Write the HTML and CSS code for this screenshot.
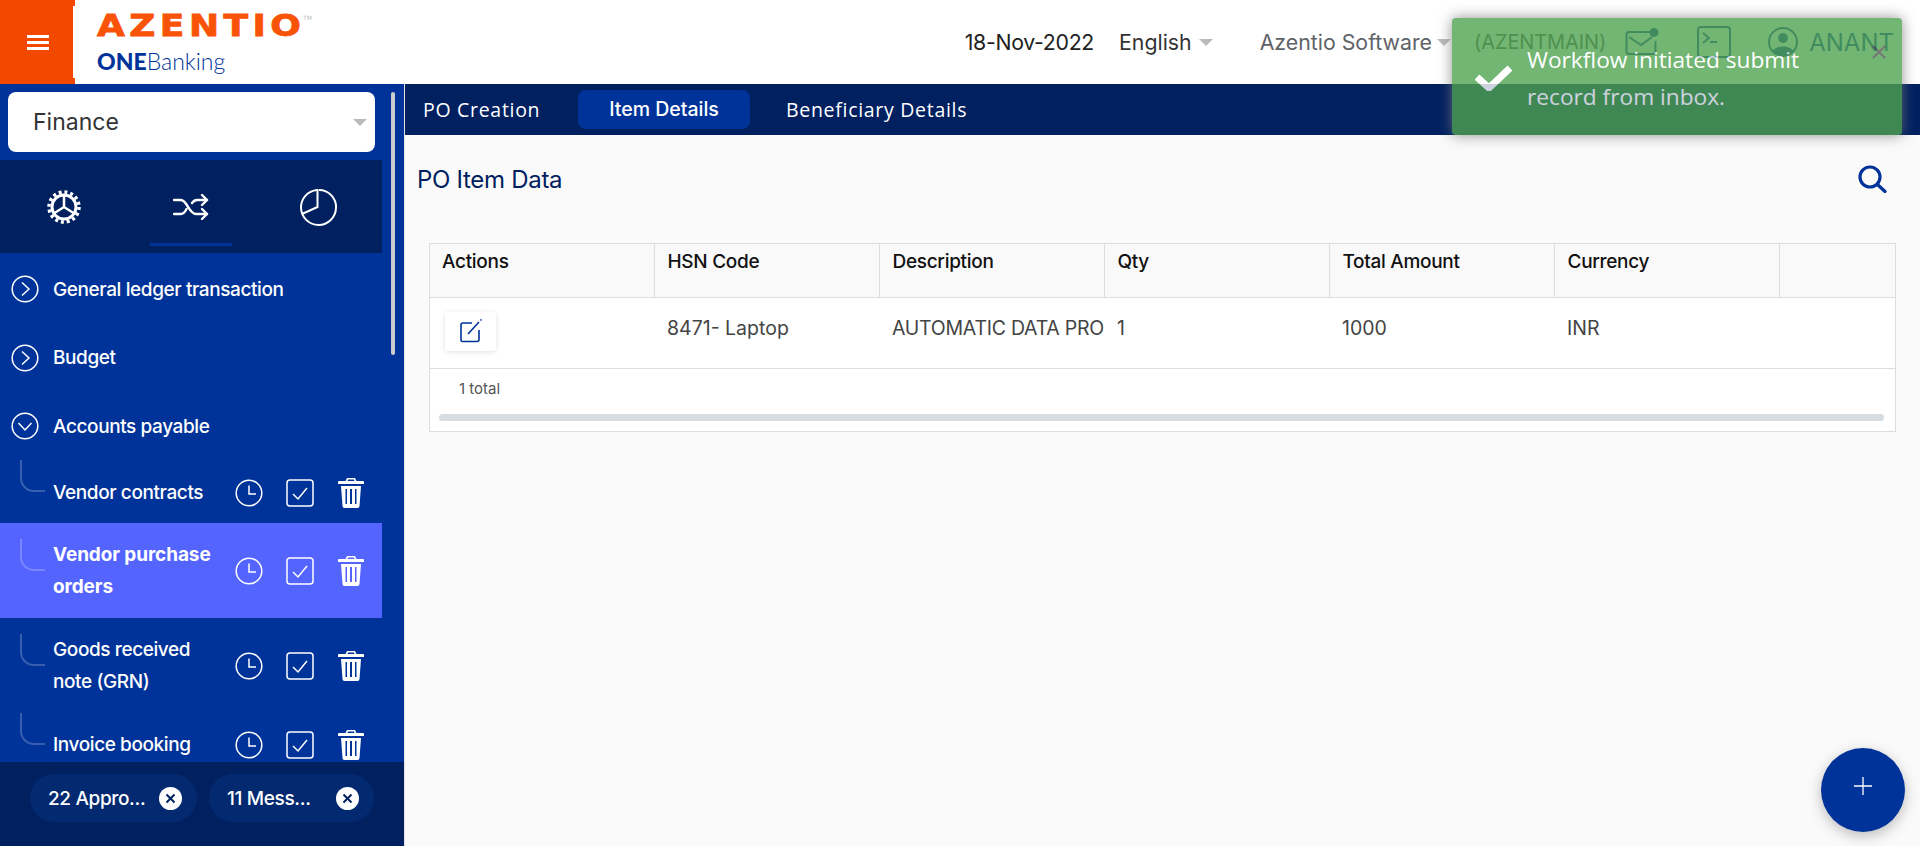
FILE: index.html
```html
<!DOCTYPE html>
<html lang="en">
<head>
  <meta charset="UTF-8">
  <meta name="viewport" content="width=device-width, initial-scale=1.0">
  <title>PO Item Data</title>
  <link rel="stylesheet" href="styles.css">
</head>
<body>
  <header class="topbar">
    <button class="burger" aria-label="Menu">
      <span></span><span></span><span></span>
    </button>
    <div class="burger-notch"></div>
    <div class="logo">
      <div class="logo-main"><span class="logo-word">AZENTIO</span><span class="logo-tm">TM</span></div>
      <div class="logo-sub"><b>ONE</b>Banking</div>
    </div>
    <div class="topbar-right">
      <span class="date">18-Nov-2022</span>
      <span class="lang">English</span><i class="caret"></i>
      <span class="company">Azentio Software</span><i class="caret"></i>
      <span class="branch">(AZENTMAIN)</span>
      <svg class="top-icon mail" width="34" height="28" viewBox="0 0 34 28" fill="none" stroke="#003399" stroke-width="2">
        <path d="M26 4H4a2.500 2.500 0 0 0-2.500 2.500v17A2.500 2.500 0 0 0 4 26h24a2.500 2.500 0 0 0 2.500-2.500V13"/>
        <path d="M4 9l12 8 11-8"/>
        <circle cx="29" cy="4.500" r="4.500" fill="#003399" stroke="none"/>
      </svg>
      <svg class="top-icon term" width="34" height="32" viewBox="0 0 34 32" fill="none" stroke="#003399" stroke-width="2">
        <rect x="1" y="1" width="32" height="30" rx="3"/>
        <path d="M6 7l6 5-6 5M13 16h7"/>
      </svg>
      <svg class="top-icon user" width="30" height="30" viewBox="0 0 30 30" fill="none" stroke="#003399" stroke-width="2">
        <circle cx="15" cy="15" r="14"/>
        <circle cx="15" cy="11" r="5" fill="#003399" stroke="none"/>
        <path d="M5 24c2-6 18-6 20 0a14 14 0 0 1-20 0z" fill="#003399" stroke="none"/>
      </svg>
      <span class="username">ANANT</span>
    </div>
  </header>

  <div class="layout">
    <aside class="sidebar">
      <div class="module-select">
        <span>Finance</span><i class="caret"></i>
      </div>
      <div class="side-tabs">
        <div class="side-tab">
          <svg width="34" height="34" viewBox="0 0 34 34" fill="none" stroke="#fff">
            <circle cx="17" cy="17" r="12" stroke-width="3"/>
            <circle cx="17" cy="17" r="15" stroke-width="3.500" stroke-dasharray="3 2.890"/>
            <path d="M17 17V6M17 17l-9.500 6M17 17l9.500 6" stroke-width="2.500"/>
          </svg>
        </div>
        <div class="side-tab active">
          <svg width="36" height="26" viewBox="0 0 36 26" fill="none" stroke="#fff" stroke-width="2.400" stroke-linecap="round" stroke-linejoin="round">
            <path d="M1 6h7c6 0 8 14 15 14h11M1 20h7c2.500 0 4-2 5.500-5M19 9c1.500-2 2.500-3 5-3h10"/>
            <path d="M29 1l5 5-5 5M29 15l5 5-5 5"/>
          </svg>
        </div>
        <div class="side-tab">
          <svg width="38" height="38" viewBox="0 0 38 38" fill="none" stroke="#fff" stroke-width="2">
            <path d="M18 2a17.500 17.500 0 1 0 19 18"/>
            <path d="M20 2a17 17 0 0 1 17 18"/>
            <path d="M18.500 1v18L3 26"/>
          </svg>
        </div>
      </div>

      <div class="menu">
        <div class="menu-row">
          <svg class="toggle" width="28" height="28" viewBox="0 0 28 28" fill="none" stroke="#fff" stroke-width="1.500">
            <circle cx="14" cy="14" r="12.800"/><path d="M11 7.500l7 6.500-7 6.500"/>
          </svg>
          General ledger transaction
        </div>
        <div class="menu-row">
          <svg class="toggle" width="28" height="28" viewBox="0 0 28 28" fill="none" stroke="#fff" stroke-width="1.500">
            <circle cx="14" cy="14" r="12.800"/><path d="M11 7.500l7 6.500-7 6.500"/>
          </svg>
          Budget
        </div>
        <div class="menu-row open">
          <svg class="toggle" width="28" height="28" viewBox="0 0 28 28" fill="none" stroke="#fff" stroke-width="1.500">
            <circle cx="14" cy="14" r="12.800"/><path d="M7.500 11l6.500 7 6.500-7"/>
          </svg>
          Accounts payable
        </div>

        <div class="sub-list">
          <div class="sub-item">
            <div class="tree-line"></div>
            <div class="sub-name">Vendor contracts</div>
            <svg class="row-icon" width="28" height="28" viewBox="0 0 28 28" fill="none" stroke="#fff" stroke-width="1.500">
              <circle cx="14" cy="14" r="12.800"/><path d="M14 6.500V15h7"/>
            </svg>
            <svg class="row-icon" width="28" height="28" viewBox="0 0 28 28" fill="none" stroke="#fff" stroke-width="1.500">
              <rect x="1" y="1" width="26" height="26" rx="3"/><path d="M7 15l5 5 9-11"/>
            </svg>
            <svg class="row-icon trash" width="26" height="30" viewBox="0 0 26 30" fill="#fff">
              <path d="M9 0h8l1.500 3H25a1 1 0 0 1 1 1v2H0V4a1 1 0 0 1 1-1h6.500zM10 1.500L9.500 3h7L16 1.500z"/>
              <path fill-rule="evenodd" d="M3 8h20l-1.500 20a2 2 0 0 1-2 2h-13a2 2 0 0 1-2-2zM7.500 11v15H9V11zM12 11v15h2V11zM17 11v15h1.500V11z"/>
            </svg>
          </div>
          <div class="sub-item active">
            <div class="tree-line"></div>
            <div class="sub-name">Vendor purchase orders</div>
            <svg class="row-icon" width="28" height="28" viewBox="0 0 28 28" fill="none" stroke="#fff" stroke-width="1.500">
              <circle cx="14" cy="14" r="12.800"/><path d="M14 6.500V15h7"/>
            </svg>
            <svg class="row-icon" width="28" height="28" viewBox="0 0 28 28" fill="none" stroke="#fff" stroke-width="1.500">
              <rect x="1" y="1" width="26" height="26" rx="3"/><path d="M7 15l5 5 9-11"/>
            </svg>
            <svg class="row-icon trash" width="26" height="30" viewBox="0 0 26 30" fill="#fff">
              <path d="M9 0h8l1.500 3H25a1 1 0 0 1 1 1v2H0V4a1 1 0 0 1 1-1h6.500zM10 1.500L9.500 3h7L16 1.500z"/>
              <path fill-rule="evenodd" d="M3 8h20l-1.500 20a2 2 0 0 1-2 2h-13a2 2 0 0 1-2-2zM7.500 11v15H9V11zM12 11v15h2V11zM17 11v15h1.500V11z"/>
            </svg>
          </div>
          <div class="sub-item">
            <div class="tree-line"></div>
            <div class="sub-name">Goods received note (GRN)</div>
            <svg class="row-icon" width="28" height="28" viewBox="0 0 28 28" fill="none" stroke="#fff" stroke-width="1.500">
              <circle cx="14" cy="14" r="12.800"/><path d="M14 6.500V15h7"/>
            </svg>
            <svg class="row-icon" width="28" height="28" viewBox="0 0 28 28" fill="none" stroke="#fff" stroke-width="1.500">
              <rect x="1" y="1" width="26" height="26" rx="3"/><path d="M7 15l5 5 9-11"/>
            </svg>
            <svg class="row-icon trash" width="26" height="30" viewBox="0 0 26 30" fill="#fff">
              <path d="M9 0h8l1.500 3H25a1 1 0 0 1 1 1v2H0V4a1 1 0 0 1 1-1h6.500zM10 1.500L9.500 3h7L16 1.500z"/>
              <path fill-rule="evenodd" d="M3 8h20l-1.500 20a2 2 0 0 1-2 2h-13a2 2 0 0 1-2-2zM7.500 11v15H9V11zM12 11v15h2V11zM17 11v15h1.500V11z"/>
            </svg>
          </div>
          <div class="sub-item">
            <div class="tree-line"></div>
            <div class="sub-name">Invoice booking</div>
            <svg class="row-icon" width="28" height="28" viewBox="0 0 28 28" fill="none" stroke="#fff" stroke-width="1.500">
              <circle cx="14" cy="14" r="12.800"/><path d="M14 6.500V15h7"/>
            </svg>
            <svg class="row-icon" width="28" height="28" viewBox="0 0 28 28" fill="none" stroke="#fff" stroke-width="1.500">
              <rect x="1" y="1" width="26" height="26" rx="3"/><path d="M7 15l5 5 9-11"/>
            </svg>
            <svg class="row-icon trash" width="26" height="30" viewBox="0 0 26 30" fill="#fff">
              <path d="M9 0h8l1.500 3H25a1 1 0 0 1 1 1v2H0V4a1 1 0 0 1 1-1h6.500zM10 1.500L9.500 3h7L16 1.500z"/>
              <path fill-rule="evenodd" d="M3 8h20l-1.500 20a2 2 0 0 1-2 2h-13a2 2 0 0 1-2-2zM7.500 11v15H9V11zM12 11v15h2V11zM17 11v15h1.500V11z"/>
            </svg>
          </div>
        </div>
      </div>

      <div class="side-footer">
        <div class="chip chip-approvals">
          <span>22 Appro...</span>
          <svg width="23" height="23" viewBox="0 0 23 23"><circle cx="11.500" cy="11.500" r="11.500" fill="#fff"/><path d="M7.500 7.500l8 8M15.500 7.500l-8 8" stroke="#002060" stroke-width="2"/></svg>
        </div>
        <div class="chip chip-messages">
          <span>11 Mess...</span>
          <svg width="23" height="23" viewBox="0 0 23 23"><circle cx="11.500" cy="11.500" r="11.500" fill="#fff"/><path d="M7.500 7.500l8 8M15.500 7.500l-8 8" stroke="#002060" stroke-width="2"/></svg>
        </div>
      </div>
      <div class="side-scroll"></div>
    </aside>

    <main class="content">
      <nav class="tabs">
        <a class="tab first">PO Creation</a>
        <a class="tab current">Item Details</a>
        <a class="tab last">Beneficiary Details</a>
      </nav>

      <div class="panel-head">
        <h2>PO Item Data</h2>
        <svg width="30" height="28" viewBox="0 0 30 28" fill="none" stroke="#003399" stroke-width="3.200" stroke-linecap="round">
          <circle cx="12" cy="12" r="10"/><path d="M20 20l7 6.500"/>
        </svg>
      </div>

      <div class="grid-wrap">
        <table class="grid">
          <thead>
            <tr>
              <th>Actions</th><th>HSN Code</th><th>Description</th><th>Qty</th><th>Total Amount</th><th>Currency</th><th class="spare"></th>
            </tr>
          </thead>
          <tbody>
            <tr>
              <td class="action-cell">
                <button class="edit-btn" aria-label="Edit">
                  <svg width="24" height="24" viewBox="0 0 24 24" fill="none" stroke="#003399" stroke-width="1.600">
                    <path d="M13 4H4a2 2 0 0 0-2 2v15a1.500 1.500 0 0 0 1.500 1.500H18a2 2 0 0 0 2-2V11"/>
                    <path d="M9 15L20 3M21.500 1.500l1-1"/>
                  </svg>
                </button>
              </td>
              <td>8471- Laptop</td>
              <td class="desc">AUTOMATIC DATA PROCESSING MACHINES</td>
              <td>1</td>
              <td>1000</td>
              <td>INR</td>
              <td></td>
            </tr>
          </tbody>
        </table>
        <div class="grid-foot">1 total</div>
        <div class="grid-scroll"></div>
      </div>
    </main>
  </div>

  <div class="toast">
    <svg class="toast-check" width="38" height="28" viewBox="0 0 38 28"><path d="M2 14l12 11L35 5" fill="none" stroke="#fff" stroke-width="7"/></svg>
    <div class="toast-msg">Workflow initiated submit record from inbox.</div>
    <svg class="toast-close" width="14" height="14" viewBox="0 0 14 14"><path d="M1 1l12 12M13 1L1 13" stroke="#555" stroke-width="2"/></svg>
  </div>

  <button class="fab" aria-label="Add">
    <svg width="18" height="18" viewBox="0 0 18 18"><path d="M9 0v18M0 9h18" stroke="#fff" stroke-width="1.300"/></svg>
  </button>
</body>
</html>
```

FILE: styles.css
```css
/* page */
body {
  margin: 0;
  height: 846px;
  overflow: hidden;
  font-family: Inter, sans-serif;
  background-color: #fafafa;
  color: #333;
}

.caret {
  display: inline-block;
  width: 0;
  height: 0;
  border-left: 7px solid transparent;
  border-right: 7px solid transparent;
  border-top: 7px solid #bbb;
}

/* top bar */
.topbar {
  display: flex;
  align-items: center;
  height: 84px;
  background-color: #fff;
}

.burger {
  display: flex;
  flex-direction: column;
  justify-content: center;
  gap: 3px;
  width: 73px;
  height: 84px;
  padding: 0 24px 0 27px;
  border: none;
  background-color: #f24800;
}

.burger span {
  height: 3px;
  background-color: #fff;
}

.burger-notch {
  width: 2px;
  height: 72px;
  border-top: 6px solid #f24800;
  border-bottom: 6px solid #f24800;
}

.logo {
  margin-left: 22px;
}

.logo-main {
  display: flex;
  font-family: "DejaVu Sans", sans-serif;
  font-weight: 700;
  font-size: 30px;
  line-height: 30px;
  color: #f95308;
}

.logo-word {
  width: 206px;
  letter-spacing: 3.700px;
  transform: scaleX(1.2);
  transform-origin: left center;
  -webkit-text-stroke: 0.800px #f95308;
}

.logo-tm {
  font-size: 6px;
  font-weight: 400;
  line-height: 14px;
  color: #bbb;
}

.logo-sub {
  margin-top: 7px;
  font-family: Lato, sans-serif;
  font-size: 23px;
  line-height: 26px;
  font-weight: 300;
  color: #003399;
}

.logo-sub b {
  font-weight: 900;
}

.topbar-right {
  display: flex;
  align-items: center;
  margin-left: auto;
  padding-right: 26px;
  font-size: 21.300px;
}

.date {
  margin-right: 25px;
  letter-spacing: -0.300px;
  color: #222;
}

.lang {
  margin-right: 7px;
  color: #333;
}

.company {
  margin-left: 47px;
  margin-right: 5px;
  color: #5f6368;
}

.branch {
  margin-left: 23px;
  font-size: 20px;
  letter-spacing: -0.100px;
  color: #444;
}

.mail {
  margin-left: 19px;
}

.term {
  margin-left: 37.500px;
}

.user {
  margin-left: 37px;
}

.username {
  margin-left: 11.500px;
  font-size: 24px;
  color: #003399;
}

/* sidebar */
.layout {
  display: flex;
  height: 762px;
}

.sidebar {
  position: relative;
  display: flex;
  flex-direction: column;
  flex-shrink: 0;
  width: 404px;
  background-color: #003399;
  border-right: 1px solid #e2e2e2;
}

.module-select {
  display: flex;
  align-items: center;
  justify-content: space-between;
  width: 367px;
  height: 60px;
  box-sizing: border-box;
  margin: 8px 0 8px 8px;
  padding: 0 8px 0 25px;
  background-color: #fff;
  border-radius: 8px;
  font-size: 23px;
  color: #333;
}

.side-tabs {
  display: flex;
  justify-content: space-between;
  width: 382px;
  height: 93px;
  background-color: #002060;
}

.side-tab {
  display: flex;
  align-items: center;
  justify-content: center;
  box-sizing: border-box;
  width: 112px;
  height: 86px;
  margin: 0 23px;
  padding-top: 11px;
  border-bottom: 3px solid transparent;
}

.side-tab.active {
  border-bottom-color: #003399;
}

.menu {
  flex: 1;
  width: 382px;
  padding-top: 16px;
  overflow: hidden;
  font-size: 19px;
  font-weight: 500;
  letter-spacing: -0.400px;
  color: #fff;
}

.menu-row {
  display: flex;
  align-items: center;
  gap: 14px;
  height: 40px;
  margin-bottom: 28.500px;
  padding-left: 11px;
}

.menu-row.open {
  margin-bottom: 0;
}

.sub-list {
  margin-top: -2px;
}

.sub-item {
  display: flex;
  align-items: center;
  height: 63px;
  padding: 16px 18px 0 20px;
}

.sub-item:first-child {
  height: 61px;
  padding-top: 18px;
}

.sub-item.active {
  padding-bottom: 16px;
  background-color: #5464ff;
  font-weight: 700;
  letter-spacing: -0.100px;
}

.tree-line {
  align-self: flex-start;
  flex-shrink: 0;
  box-sizing: border-box;
  width: 25px;
  height: 32px;
  margin-right: 8px;
  border-left: 2px solid rgba(255, 255, 255, 0.22);
  border-bottom: 2px solid rgba(255, 255, 255, 0.22);
  border-bottom-left-radius: 14px;
}

.sub-item:first-child .tree-line {
  margin-top: -2px;
}

.sub-name {
  flex: 1;
  line-height: 31.500px;
}

.row-icon {
  flex-shrink: 0;
  margin-left: 23px;
}

.sub-name + .row-icon {
  margin-left: 14px;
}

.row-icon.trash {
  margin-left: 24px;
}

.side-footer {
  display: flex;
  gap: 12px;
  height: 84px;
  box-sizing: border-box;
  padding: 12px 0 0 30px;
  background-color: #002060;
}

.chip {
  display: flex;
  align-items: center;
  justify-content: space-between;
  box-sizing: border-box;
  height: 48px;
  padding: 0 15px 0 18px;
  background-color: #032a70;
  border-radius: 24px;
  font-size: 19px;
  font-weight: 500;
  letter-spacing: -0.350px;
  color: #fff;
}

.chip-approvals {
  width: 167px;
}

.chip-messages {
  width: 165px;
}

.side-scroll {
  position: absolute;
  top: 8px;
  left: 391px;
  width: 4px;
  height: 263px;
  background-color: #ccc;
  border-radius: 2px;
}

/* main area */
.content {
  flex: 1;
  min-width: 0;
}

.tabs {
  display: flex;
  align-items: center;
  height: 51px;
  padding-left: 18px;
  background-color: #002060;
  color: #fff;
  font-family: "Open Sans", sans-serif;
  font-size: 19.500px;
  letter-spacing: 0.700px;
}

.tab.first {
  width: 155px;
}

.tab.current {
  width: 172px;
  line-height: 39px;
  text-align: center;
  background-color: #003399;
  border-radius: 8px;
  font-family: Inter, sans-serif;
  font-size: 19.500px;
  font-weight: 500;
  letter-spacing: 0;
}

.tab.last {
  margin-left: 36px;
}

.panel-head {
  display: flex;
  align-items: center;
  justify-content: space-between;
  height: 60px;
  padding: 14px 32px 0 12px;
}

.panel-head h2 {
  margin: 0;
  font-size: 24px;
  font-weight: 400;
  letter-spacing: -0.300px;
  color: #002060;
}

.grid-wrap {
  width: 1467px;
  height: 189px;
  box-sizing: border-box;
  margin: 34px 0 0 24px;
  background-color: #fff;
  border: 1px solid #ddd;
}

.grid {
  width: 100%;
  table-layout: fixed;
  border-collapse: collapse;
  font-size: 19.500px;
}

.grid th {
  width: 225px;
  height: 53px;
  box-sizing: border-box;
  padding: 0 12px 18px 13px;
  background-color: #f9f9f9;
  border-right: 1px solid #ddd;
  border-bottom: 1px solid #ddd;
  text-align: left;
  font-size: 19px;
  font-weight: 500;
  letter-spacing: -0.300px;
  color: #111;
}

.grid th:first-child {
  width: 224px;
  padding-left: 12px;
}

.grid th.spare {
  width: auto;
  border-right: none;
}

.grid td {
  height: 71px;
  box-sizing: border-box;
  padding: 14px 12px 0 13px;
  border-bottom: 1px solid #ddd;
  vertical-align: top;
  line-height: 32px;
  white-space: nowrap;
  overflow: hidden;
  color: #444;
}

.grid td.action-cell {
  padding-left: 12px;
}

.grid td.desc {
  letter-spacing: -0.250px;
}

.edit-btn {
  display: flex;
  align-items: center;
  justify-content: center;
  width: 51px;
  height: 39px;
  margin-left: 3px;
  padding: 0;
  background-color: #fff;
  border: none;
  border-radius: 3px;
  box-shadow: 0 1px 5px rgba(0, 0, 0, 0.12);
}

.grid-foot {
  padding: 11px 0 0 29px;
  font-size: 15px;
  line-height: 18px;
  color: #555;
}

.grid-scroll {
  height: 7px;
  margin: 16px 11px 0 9px;
  background-color: #d6dce0;
  border-radius: 4px;
}

/* toast and add button sit over the page */
.toast {
  position: absolute;
  top: 18px;
  left: 1452px;
  width: 450px;
  height: 117px;
  box-sizing: border-box;
  padding: 23px 60px 0 75px;
  background-color: #51a351;
  border-radius: 4px;
  box-shadow: 0 0 14px #777;
  opacity: 0.8;
  color: #fff;
  font-family: "Open Sans", sans-serif;
  font-size: 22.700px;
  line-height: 37px;
}

.toast-check {
  position: absolute;
  top: 45px;
  left: 23px;
}

.toast-close {
  position: absolute;
  top: 27px;
  left: 420px;
}

.fab {
  position: absolute;
  left: 1821px;
  top: 748px;
  display: flex;
  align-items: center;
  justify-content: center;
  width: 84px;
  height: 84px;
  padding: 0 0 8px;
  background-color: #003399;
  border: none;
  border-radius: 50%;
  box-shadow: 0 4px 14px rgba(0, 0, 0, 0.25);
}
```
